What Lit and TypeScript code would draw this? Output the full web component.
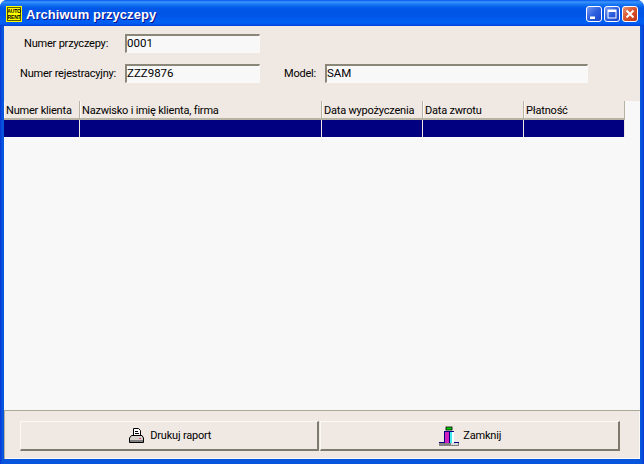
import { LitElement, html, css } from "lit";
import { customElement } from "lit/decorators.js";

const COLS = [
  { t: "Numer klienta", w: 76 },
  { t: "Nazwisko i imię klienta, firma", w: 242 },
  { t: "Data wypożyczenia", w: 101 },
  { t: "Data zwrotu", w: 101 },
  { t: "Płatność", w: 101 },
];

@customElement("app-root")
export class AppRoot extends LitElement {
  static styles = css`
    :host {
      display: block;
      width: 644px;
      height: 464px;
      font-family: Roboto, "Liberation Sans", Arial, sans-serif;
      font-size: 11px;
      letter-spacing: -0.2px;
      color: #000;
    }
    .window {
      width: 644px;
      height: 464px;
      display: flex;
      flex-direction: column;
      box-sizing: border-box;
      background: linear-gradient(90deg, #0831d9 0, #0855dd 2px, #0855dd 642px, #0831d9 644px);
      border-radius: 7px 7px 0 0;
      overflow: hidden;
    }
    .titlebar {
      height: 26px;
      flex: none;
      display: flex;
      align-items: center;
      box-sizing: border-box;
      padding: 2px 6px 0 6px;
      background: linear-gradient(180deg, #0058ee 0, #3f94fb 2px, #1a7af5 4px, #0058e8 8px, #0054e6 14px, #0060f4 22px, #0059ef 24px, #003dd7 26px);
    }
    .app-icon { width: 16px; height: 16px; flex: none; display: block; }
    .title {
      margin-left: 4px;
      flex: 1;
      color: #fff;
      font-family: "Liberation Sans", Arial, sans-serif;
      font-weight: 700;
      font-size: 13px;
      letter-spacing: 0.05px;
      text-shadow: 1px 1px 0 #0f1089;
      white-space: nowrap;
    }
    .ctl {
      width: 16px;
      height: 16px;
      margin-left: 2px;
      display: block;
      flex: none;
    }
    .client {
      flex: 1;
      margin: 0 4px 5px 4px;
      display: flex;
      flex-direction: column;
      background: #f0e8e2;
      min-height: 0;
    }
    .form {
      height: 75px;
      flex: none;
      box-sizing: border-box;
      padding-top: 8px;
      display: grid;
      grid-template-columns: 121px 135px 65px 263px;
      grid-template-rows: 19px 19px;
      row-gap: 11px;
      align-items: center;
    }
    .lbl { white-space: nowrap; }
    .l1 { padding-left: 20px; }
    .l2 { padding-left: 16px; }
    .l3 { padding-left: 24px; }
    .input {
      height: 19px;
      box-sizing: border-box;
      background: #f8f8f8;
      border-style: solid;
      border-width: 2px 1px 1px 2px;
      border-color: #8a8678 #fbf9f6 #fbf9f6 #8a8678;
      padding-left: 0;
      line-height: 15px;
      font-size: 11.5px;
      letter-spacing: 0;
      white-space: nowrap;
    }
    .grid {
      flex: 1;
      min-height: 0;
      background: #f8f8f8;
    }
    .head, .row { display: flex; width: 621px; }
    .head { height: 19px; box-sizing: border-box; background: #f0e8e2; border-bottom: 2px solid #b7b3a4; }
    .hc {
      box-sizing: border-box;
      border-right: 1px solid #b7b3a4;
      box-shadow: inset 1px 0 0 #fbf9f6;
      padding-left: 2px;
      line-height: 20px;
      white-space: nowrap;
      overflow: hidden;
    }
    .row { height: 18px; box-sizing: border-box; background: #000080; border-bottom: 1px solid #fbfbfb; }
    .rc { box-sizing: border-box; border-right: 1px solid #f0e8e2; }
    .footer {
      height: 49px;
      flex: none;
      box-sizing: border-box;
      border-top: 1px solid #aaa899;
      box-shadow: inset 1px 0 0 #b7b3a4, inset 0 -1px 0 #fbf9f6, inset -1px 0 0 #fbf9f6;
      padding: 10px 20px 8px 16px;
      display: flex;
      gap: 1px;
    }
    .btn {
      height: 30px;
      box-sizing: border-box;
      background: #f0e8e2;
      border-style: solid;
      border-width: 1px 2px 2px 1px;
      border-color: #fbf9f6 #7c7a6c #7c7a6c #fbf9f6;
      display: flex;
      align-items: center;
      justify-content: center;
      gap: 5px;
      font: inherit;
      letter-spacing: inherit;
      color: inherit;
      padding: 0 0 0 2px;
    }
    .b1 { width: 299px; }
    .b2 { width: 301px; gap: 4px; }
    .btn svg { display: block; flex: none; }
  `;

  render() {
    return html`
      <div class="window">
        <div class="titlebar">
          <svg class="app-icon" viewBox="0 0 16 16">
            <rect width="16" height="16" fill="#ffff00" />
            <rect x="1.5" y="1.5" width="13" height="13" fill="none" stroke="#5a5a00" />
            <text x="8" y="7.2" font-size="5" font-weight="700" text-anchor="middle" fill="#000" font-family="Liberation Sans">AUTO</text>
            <text x="8" y="12.7" font-size="5" font-weight="700" text-anchor="middle" fill="#000" font-family="Liberation Sans">RENT</text>
          </svg>
          <div class="title">Archiwum przyczepy</div>
          <svg class="ctl" viewBox="0 0 16 16">
            <defs>
              <linearGradient id="bg" x1="0" y1="0" x2="1" y2="1">
                <stop offset="0" stop-color="#7d9cf0" /><stop offset="0.5" stop-color="#2c5fe0" /><stop offset="1" stop-color="#1b41c4" />
              </linearGradient>
              <linearGradient id="rg" x1="0" y1="0" x2="1" y2="1">
                <stop offset="0" stop-color="#ea9a78" /><stop offset="0.5" stop-color="#d9502a" /><stop offset="1" stop-color="#bd3212" />
              </linearGradient>
            </defs>
            <rect x="0.5" y="0.5" width="15" height="15" rx="2.5" fill="url(#bg)" stroke="#fff" />
            <rect x="4" y="10.5" width="5" height="2.5" fill="#fff" />
          </svg>
          <svg class="ctl" viewBox="0 0 16 16">
            <rect x="0.5" y="0.5" width="15" height="15" rx="2.5" fill="url(#bg)" stroke="#fff" />
            <rect x="4" y="4" width="8" height="8" fill="none" stroke="#fff" />
            <rect x="4" y="4" width="8" height="2" fill="#fff" />
          </svg>
          <svg class="ctl" viewBox="0 0 16 16">
            <rect x="0.5" y="0.5" width="15" height="15" rx="2.5" fill="url(#rg)" stroke="#fff" />
            <path d="M4.5 4.5 L11.5 11.5 M11.5 4.5 L4.5 11.5" stroke="#fff" stroke-width="2" />
          </svg>
        </div>
        <div class="client">
          <div class="form">
            <div class="lbl l1">Numer przyczepy:</div>
            <div class="input">0001</div>
            <div></div>
            <div></div>
            <div class="lbl l2">Numer rejestracyjny:</div>
            <div class="input">ZZZ9876</div>
            <div class="lbl l3">Model:</div>
            <div class="input">SAM</div>
          </div>
          <div class="grid">
            <div class="head">
              ${COLS.map((c) => html`<div class="hc" style="width:${c.w}px">${c.t}</div>`)}
            </div>
            <div class="row">
              ${COLS.map((c) => html`<div class="rc" style="width:${c.w}px"></div>`)}
            </div>
          </div>
          <div class="footer">
            <button class="btn b1">
              <svg width="17" height="17" viewBox="0 0 17 17">
                <path d="M5.5 1.5 H10.5 L12.5 3.5 V9.5 H5.5 Z" fill="#fff" stroke="#000" />
                <path d="M7 4.5 H10 M7 6.5 H11" stroke="#000" />
                <path d="M3.5 8.5 H14 L15.5 11 V15.5 H1.5 V11 Z" fill="#d8d4cc" stroke="#000" />
                <rect x="2" y="13" width="13" height="2" fill="#808080" />
                <rect x="11" y="11" width="2" height="1" fill="#e0409a" />
              </svg>
              <span>Drukuj raport</span>
            </button>
            <button class="btn b2">
              <svg width="20" height="20" viewBox="0 0 20 20">
                <rect x="7" y="1" width="6" height="3" fill="#00d000" stroke="#000" stroke-width="0.8" />
                <rect x="0" y="17" width="20" height="3" fill="#808080" />
                <rect x="12" y="17" width="7" height="2" fill="#d8d8d8" />
                <rect x="0" y="16" width="20" height="1" fill="#000080" />
                <rect x="5" y="5" width="10" height="12" fill="#000080" />
                <rect x="6" y="6" width="4" height="11" fill="#d020c0" />
                <rect x="11" y="6" width="4" height="11" fill="#40e8f0" />
                <rect x="13" y="6" width="2" height="11" fill="#fff" />
              </svg>
              <span>Zamknij</span>
            </button>
          </div>
        </div>
      </div>
    `;
  }
}
